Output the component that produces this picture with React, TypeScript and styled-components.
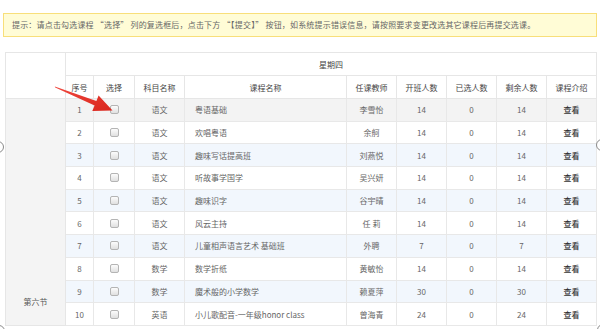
import * as React from "react";
import styled, { createGlobalStyle } from "styled-components";

const GlobalStyle = createGlobalStyle`
  html, body {
    margin: 0;
    padding: 0;
    background: #fff;
    overflow: hidden;
  }
  body {
    font-family: "Noto Sans CJK SC", "Noto Sans", sans-serif;
  }
`;

type Course = {
  no: number;
  subject: string;
  name: string;
  teacher: string;
  open: number;
  chosen: number;
  left: number;
};

const courses: Course[] = [
  { no: 1, subject: "语文", name: "粤语基础", teacher: "李雪怡", open: 14, chosen: 0, left: 14 },
  { no: 2, subject: "语文", name: "欢唱粤语", teacher: "余舸", open: 14, chosen: 0, left: 14 },
  { no: 3, subject: "语文", name: "趣味写话提高班", teacher: "刘燕悦", open: 14, chosen: 0, left: 14 },
  { no: 4, subject: "语文", name: "听故事学国学", teacher: "吴兴妍", open: 14, chosen: 0, left: 14 },
  { no: 5, subject: "语文", name: "趣味识字", teacher: "谷宇晴", open: 14, chosen: 0, left: 14 },
  { no: 6, subject: "语文", name: "风云主持", teacher: "任 莉", open: 14, chosen: 0, left: 14 },
  { no: 7, subject: "语文", name: "儿童相声语言艺术 基础班", teacher: "外聘", open: 7, chosen: 0, left: 7 },
  { no: 8, subject: "数学", name: "数学折纸", teacher: "黄敏怡", open: 14, chosen: 0, left: 14 },
  { no: 9, subject: "数学", name: "魔术般的小学数学", teacher: "赖夏萍", open: 30, chosen: 0, left: 30 },
  { no: 10, subject: "英语", name: "小儿歌配音-一年级honor class", teacher: "曾海青", open: 24, chosen: 0, left: 24 },
];

const Page = styled.div`
  position: relative;
  width: 600px;
  height: 329px;
  padding: 13px 3px 0;
  box-sizing: border-box;
`;

const Notice = styled.div`
  height: 24px;
  box-sizing: border-box;
  border: 1.5px solid #f8df7a;
  background: #fffcd6;
  color: #666;
  font-size: 8px;
  letter-spacing: 0.18px;
  line-height: 21px;
  padding-left: 8px;
  white-space: nowrap;
`;

const Table = styled.table`
  margin: 15px 0 0 2px;
  width: 592px;
  table-layout: fixed;
  border-collapse: collapse;
  border: 1.5px solid #e4e4e4;
  font-size: 8px;
  color: #666;
`;

const HeadCell = styled.th`
  height: 22px;
  padding: 0;
  border: 1px solid #e6e6e6;
  background: #fff;
  color: #444;
  font-weight: normal;
  text-align: center;
`;

const Row = styled.tr<{ $tone: "hover" | "stripe" | "plain" }>`
  height: 22.7px;
  background: ${(p) =>
    p.$tone === "hover" ? "#f3f3f3" : p.$tone === "stripe" ? "#f2f7fd" : "#fff"};
`;

const Cell = styled.td<{ $left?: boolean; $strong?: boolean }>`
  padding: ${(p) => (p.$left ? "0 0 0 10px" : "0")};
  border: 1px solid #e8e8e8;
  text-align: ${(p) => (p.$left ? "left" : "center")};
  white-space: nowrap;
  overflow: hidden;
  color: ${(p) => (p.$strong ? "#333" : "#666")};
  font-weight: ${(p) => (p.$strong ? 500 : "normal")};
`;

const SectionCell = styled.td`
  background: #f4f4f4;
  border: 1px solid #e6e6e6;
  vertical-align: bottom;
  text-align: center;
  padding: 0 0 18px;
  color: #555;
`;

const Check = styled.input`
  appearance: none;
  display: block;
  margin: 0 auto;
  width: 9px;
  height: 9px;
  border: 1px solid #b4b4b4;
  border-radius: 2px;
  background: linear-gradient(#fcfcfc, #e0e0e0);
  box-sizing: border-box;
`;

const Arrow = styled.svg`
  position: absolute;
  left: 0;
  top: 0;
  pointer-events: none;
`;

const Handle = styled.span<{ $x: number; $y: number }>`
  position: absolute;
  left: ${(p) => p.$x - 6}px;
  top: ${(p) => p.$y - 6}px;
  width: 12px;
  height: 12px;
  border-radius: 50%;
  border: 1.5px solid #8a8a8a;
  background: #fff;
  box-sizing: border-box;
`;

const headers = ["序号", "选择", "科目名称", "课程名称", "任课教师", "开班人数", "已选人数", "剩余人数", "课程介绍"];
const widths = [60, 28, 41, 50, 162, 50, 50, 50, 50, 50];

export default function App() {
  return (
    <Page>
      <GlobalStyle />
      <Notice>
        提示：请点击勾选课程 “选择” 列的复选框后，点击下方 “【提交】” 按钮，如系统提示错误信息，请按照要求变更改选其它课程后再提交选课。
      </Notice>
      <Table>
        <colgroup>
          {widths.map((w, i) => (
            <col key={i} style={{ width: w }} />
          ))}
        </colgroup>
        <thead>
          <tr>
            <HeadCell rowSpan={2} />
            <HeadCell colSpan={9}>星期四</HeadCell>
          </tr>
          <tr>
            {headers.map((h) => (
              <HeadCell key={h}>{h}</HeadCell>
            ))}
          </tr>
        </thead>
        <tbody>
          {courses.map((c, i) => (
            <Row key={c.no} $tone={i === 0 ? "hover" : i % 2 === 0 ? "stripe" : "plain"}>
              {i === 0 && <SectionCell rowSpan={courses.length}>第六节</SectionCell>}
              <Cell>{c.no}</Cell>
              <Cell>
                <Check type="checkbox" />
              </Cell>
              <Cell>{c.subject}</Cell>
              <Cell $left>{c.name}</Cell>
              <Cell>{c.teacher}</Cell>
              <Cell>{c.open}</Cell>
              <Cell>{c.chosen}</Cell>
              <Cell>{c.left}</Cell>
              <Cell $strong>查看</Cell>
            </Row>
          ))}
        </tbody>
      </Table>

      <Arrow width="600" height="329" viewBox="0 0 600 329">
        <defs>
          <linearGradient id="arrowRed" x1="0" y1="0" x2="1" y2="1">
            <stop offset="0" stopColor="#f0473d" />
            <stop offset="1" stopColor="#d9261d" />
          </linearGradient>
        </defs>
        <polygon
          points="54.8,86.5 96.4,101 98.6,95.6 112.5,110.4 92.3,111 94.6,105.6 55.2,87.6"
          fill="url(#arrowRed)"
        />
      </Arrow>

      <Handle $x={-2} $y={147} />
      <Handle $x={602} $y={145} />
      <Handle $x={-1} $y={331} />
      <Handle $x={603} $y={330} />
    </Page>
  );
}
